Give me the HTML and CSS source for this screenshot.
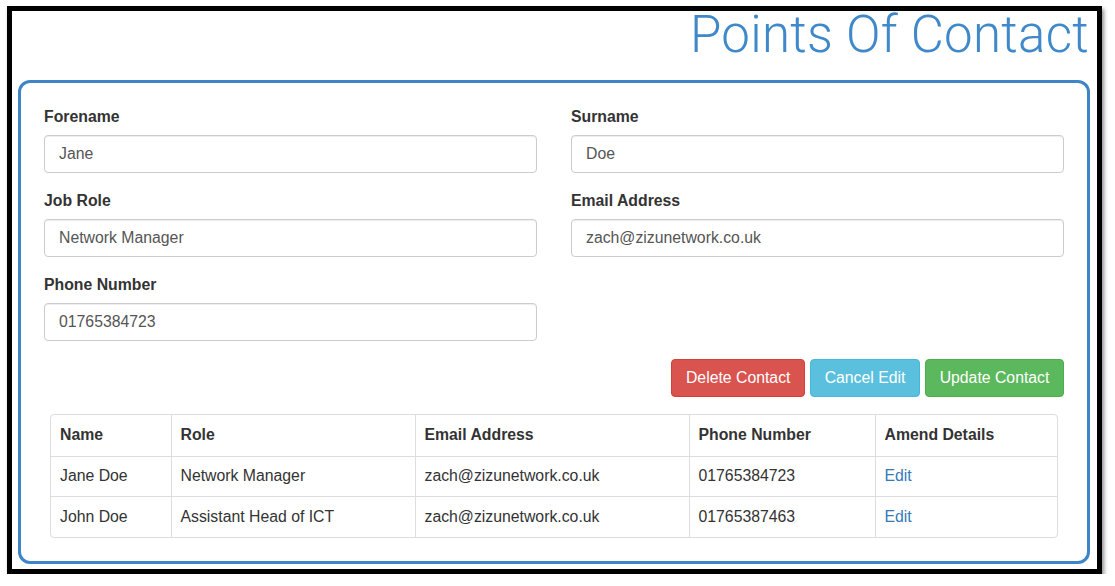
FILE: index.html
```html
<!DOCTYPE html>
<html lang="en">
<head>
    <meta charset="UTF-8">
    <meta name="viewport" content="width=device-width, initial-scale=1.0">
    <title>Points Of Contact</title>
    <link rel="stylesheet" href="styles.css">
</head>
<body>
    <div class="frame">
        <h1 class="page-title">Points Of Contact</h1>

        <div class="contact-panel">
            <form class="contact-form">
                <div class="form-group">
                    <label for="forename">Forename</label>
                    <input type="text" id="forename" class="form-control" value="Jane">
                </div>
                <div class="form-group">
                    <label for="surname">Surname</label>
                    <input type="text" id="surname" class="form-control" value="Doe">
                </div>
                <div class="form-group">
                    <label for="jobRole">Job Role</label>
                    <input type="text" id="jobRole" class="form-control" value="Network Manager">
                </div>
                <div class="form-group">
                    <label for="email">Email Address</label>
                    <input type="text" id="email" class="form-control" value="zach@zizunetwork.co.uk">
                </div>
                <div class="form-group">
                    <label for="phone">Phone Number</label>
                    <input type="text" id="phone" class="form-control" value="01765384723">
                </div>
            </form>

            <div class="button-row">
                <button class="btn btn-danger">Delete Contact</button>
                <button class="btn btn-info">Cancel Edit</button>
                <button class="btn btn-success">Update Contact</button>
            </div>

            <div class="table-wrap">
                <table class="contact-table">
                    <colgroup>
                        <col class="col-name">
                        <col class="col-role">
                        <col class="col-email">
                        <col class="col-phone">
                        <col class="col-amend">
                    </colgroup>
                    <thead>
                        <tr>
                            <th>Name</th>
                            <th>Role</th>
                            <th>Email Address</th>
                            <th>Phone Number</th>
                            <th>Amend Details</th>
                        </tr>
                    </thead>
                    <tbody>
                        <tr>
                            <td>Jane Doe</td>
                            <td>Network Manager</td>
                            <td>zach@zizunetwork.co.uk</td>
                            <td>01765384723</td>
                            <td><a href="#">Edit</a></td>
                        </tr>
                        <tr>
                            <td>John Doe</td>
                            <td>Assistant Head of ICT</td>
                            <td>zach@zizunetwork.co.uk</td>
                            <td>01765387463</td>
                            <td><a href="#">Edit</a></td>
                        </tr>
                    </tbody>
                </table>
            </div>
        </div>
    </div>
</body>
</html>
```

FILE: styles.css
```css
body {
    margin: 0;
    padding: 0;
    background-color: #ffffff;
    font-family: "Liberation Sans", Arial, sans-serif;
    font-size: 15.8px;
    line-height: 22.6px;
    color: #333333;
}

/* Outer black frame */
.frame {
    box-sizing: border-box;
    width: 1095px;
    height: 568px;
    margin: 6px 0 0 7px;
    border: 5px solid #000000;
    box-shadow: 2px 3px 4px rgba(0, 0, 0, 0.45);
    background: #ffffff;
}

.page-title {
    height: 69px;
    margin: 0;
    padding-right: 8px;
    text-align: right;
    font-family: Roboto, sans-serif;
    font-weight: 300;
    font-size: 51px;
    letter-spacing: 0.3px;
    line-height: 47px;
    color: #3f88c9;
}

.contact-panel {
    margin: 0 7px 0 6px;
    padding: 23px 23px 23px;
    border: 3px solid #3d85c6;
    border-radius: 12px;
}

/* Form */
.contact-form {
    display: grid;
    grid-template-columns: 493px 493px;
    column-gap: 34px;
}

.form-group {
    margin-bottom: 17.6px;
}

.form-group label {
    display: block;
    margin-bottom: 6px;
    font-weight: bold;
}

.form-control {
    box-sizing: border-box;
    display: block;
    width: 100%;
    height: 38px;
    padding: 0 14px;
    border: 1px solid #cccccc;
    border-radius: 4px;
    box-shadow: inset 0 1px 1px rgba(0, 0, 0, 0.075);
    font-family: inherit;
    font-size: 15.8px;
    color: #555555;
}

/* Buttons */
.button-row {
    display: flex;
    justify-content: flex-end;
    gap: 5px;
    margin-bottom: 17px;
}

.btn {
    height: 38px;
    padding: 0 13.6px;
    border: 1px solid transparent;
    border-radius: 4px;
    font-family: inherit;
    font-size: 15.8px;
    color: #ffffff;
    cursor: pointer;
}

.btn-danger {
    background-color: #d9534f;
    border-color: #d43f3a;
}

.btn-info {
    background-color: #5bc0de;
    border-color: #46b8da;
}

.btn-success {
    background-color: #5cb85c;
    border-color: #4cae4c;
}

/* Table */
.table-wrap {
    margin: 0 6px;
    border: 1px solid #dddddd;
    border-radius: 4px;
    overflow: hidden;
}

.contact-table {
    width: 1006px;
    table-layout: fixed;
    border-collapse: collapse;
}

.col-name { width: 120px; }
.col-role { width: 244px; }
.col-email { width: 274px; }
.col-phone { width: 186px; }
.col-amend { width: 182px; }

.contact-table th,
.contact-table td {
    height: 40.6px;
    box-sizing: border-box;
    padding: 8px 9px;
    text-align: left;
    vertical-align: middle;
    border-left: 1px solid #dddddd;
    border-top: 1px solid #dddddd;
}

.contact-table th {
    height: 41.6px;
}

.contact-table tr > :first-child {
    border-left: none;
}

.contact-table thead th {
    border-top: none;
    font-weight: bold;
}

.contact-table a {
    color: #337ab7;
    text-decoration: none;
}
```
